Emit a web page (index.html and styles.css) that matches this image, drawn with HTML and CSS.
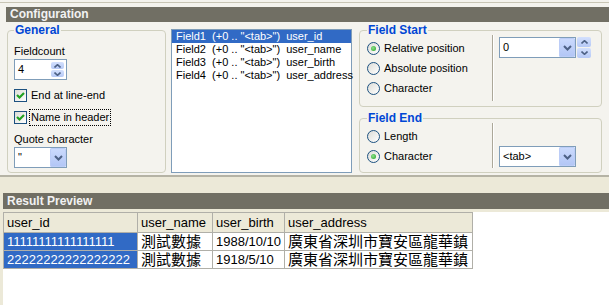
FILE: index.html
```html
<!DOCTYPE html>
<html>
<head>
<meta charset="utf-8">
<link rel="stylesheet" href="styles.css">
</head>
<body>
<div class="config">
  <div class="cfg-inner">
    <div class="bar">Configuration</div>
    <div class="cfg-row">
      <fieldset class="grp general">
        <legend>General</legend>
        <div class="lbl first">Fieldcount</div>
        <div class="edit small">
          <span class="val">4</span>
          <span class="updown">
            <span class="ub"><svg width="7" height="4" viewBox="0 0 7 4"><polyline points="0.5,3.5 3.5,0.7 6.5,3.5" fill="none" stroke="#4D6185" stroke-width="1.6"/></svg></span>
            <span class="ub"><svg width="7" height="4" viewBox="0 0 7 4"><polyline points="0.5,0.5 3.5,3.3 6.5,0.5" fill="none" stroke="#4D6185" stroke-width="1.6"/></svg></span>
          </span>
        </div>
        <div class="chk-row r1">
          <span class="chk"><svg width="9" height="9" viewBox="0 0 9 9"><polyline points="1,4 3.5,6.5 8,2" fill="none" stroke="#21A121" stroke-width="2.2"/></svg></span>
          <span class="chk-lbl">End at line-end</span>
        </div>
        <div class="chk-row r2">
          <span class="chk"><svg width="9" height="9" viewBox="0 0 9 9"><polyline points="1,4 3.5,6.5 8,2" fill="none" stroke="#21A121" stroke-width="2.2"/></svg></span>
          <span class="chk-lbl focus">Name in header</span>
        </div>
        <div class="lbl quote">Quote character</div>
        <div class="edit small combo">
          <span class="val">"</span>
          <span class="drop"><svg width="9" height="6" viewBox="0 0 9 6"><polyline points="1,1 4.5,4.5 8,1" fill="none" stroke="#4D6185" stroke-width="2"/></svg></span>
        </div>
      </fieldset>
      <div class="listbox">
        <div class="item sel">Field1  (+0 .. "&lt;tab&gt;")  user_id</div>
        <div class="item">Field2  (+0 .. "&lt;tab&gt;")  user_name</div>
        <div class="item">Field3  (+0 .. "&lt;tab&gt;")  user_birth</div>
        <div class="item">Field4  (+0 .. "&lt;tab&gt;")  user_address</div>
      </div>
      <div class="right">
        <fieldset class="grp fstart">
          <legend>Field Start</legend>
          <div class="fs-body">
            <div class="radios">
              <div class="radio-row"><span class="radio on"></span>Relative position</div>
              <div class="radio-row"><span class="radio"></span>Absolute position</div>
              <div class="radio-row"><span class="radio"></span>Character</div>
            </div>
            <div class="sep sep1"></div>
            <div class="ctrl">
              <div class="edit wide">
                <span class="val">0</span>
                <span class="drop"><svg width="9" height="6" viewBox="0 0 9 6"><polyline points="1,1 4.5,4.5 8,1" fill="none" stroke="#4D6185" stroke-width="2"/></svg></span>
              </div>
              <div class="spin-ext">
                <span class="ub"><svg width="7" height="4" viewBox="0 0 7 4"><polyline points="0.5,3.5 3.5,0.7 6.5,3.5" fill="none" stroke="#4D6185" stroke-width="1.6"/></svg></span>
                <span class="ub"><svg width="7" height="4" viewBox="0 0 7 4"><polyline points="0.5,0.5 3.5,3.3 6.5,0.5" fill="none" stroke="#4D6185" stroke-width="1.6"/></svg></span>
              </div>
            </div>
          </div>
        </fieldset>
        <fieldset class="grp fend">
          <legend>Field End</legend>
          <div class="fs-body">
            <div class="radios">
              <div class="radio-row"><span class="radio"></span>Length</div>
              <div class="radio-row"><span class="radio on"></span>Character</div>
            </div>
            <div class="sep sep2"></div>
            <div class="ctrl ctrl2">
              <div class="edit wide">
                <span class="val">&lt;tab&gt;</span>
                <span class="drop"><svg width="9" height="6" viewBox="0 0 9 6"><polyline points="1,1 4.5,4.5 8,1" fill="none" stroke="#4D6185" stroke-width="2"/></svg></span>
              </div>
            </div>
          </div>
        </fieldset>
      </div>
    </div>
  </div>
</div>
<div class="results">
  <div class="bar bar2">Result Preview</div>
  <div class="grid-area">
    <div class="table">
      <div class="c h">user_id</div>
      <div class="c h">user_name</div>
      <div class="c h">user_birth</div>
      <div class="c h">user_address</div>
      <div class="c s">11111111111111111</div>
      <div class="c cjk">測試數據</div>
      <div class="c">1988/10/10</div>
      <div class="c cjk">廣東省深圳市寶安區龍華鎮</div>
      <div class="c s">22222222222222222</div>
      <div class="c cjk">測試數據</div>
      <div class="c">1918/5/10</div>
      <div class="c cjk">廣東省深圳市寶安區龍華鎮</div>
    </div>
  </div>
</div>
</body>
</html>
```
FILE: styles.css
```css
body {
  margin: 0;
  width: 609px;
  height: 305px;
  overflow: hidden;
  background: #ECE9D8;
  font-family: "Liberation Sans", Arial, sans-serif;
  font-size: 11px;
  color: #000;
}

.config {
  height: 177px;
  box-sizing: border-box;
  background: #F4F3EE;
  padding-top: 2px;
  border-bottom: 2px solid #B5B3A5;
}

.cfg-inner {
  border-top: 1px solid #C8C5B5;
  padding: 4px 0 0 6px;
}

.bar {
  height: 15px;
  line-height: 15px;
  background: #716F64;
  color: #F2F2F2;
  font-weight: bold;
  font-size: 12px;
  padding-left: 4px;
}

.cfg-row {
  display: flex;
  align-items: flex-start;
  margin-top: 1px;
}

.grp {
  margin: 0;
  border: 1px solid #D0D0BF;
  border-radius: 4px;
  box-sizing: border-box;
  padding: 0 0 0 6px;
  min-width: 0;
}

.grp legend {
  padding: 0 1px;
  font-weight: bold;
  font-size: 12px;
  line-height: 14px;
  color: #0046D5;
}

.general {
  width: 159px;
  height: 150px;
  margin-left: 1px;
}

.lbl {
  line-height: 13px;
}

.lbl.first {
  margin-top: 8px;
}

.lbl.quote {
  margin-top: 7px;
}

.edit {
  height: 21px;
  box-sizing: border-box;
  border: 1px solid #7F9DB9;
  background: #fff;
  display: flex;
}

.edit.small {
  width: 53px;
  margin-top: 1px;
}

.edit.wide {
  width: 77px;
}

.val {
  flex: 1;
  padding-left: 3px;
  line-height: 19px;
}

.updown {
  display: flex;
  flex-direction: column;
  gap: 1px;
  width: 13px;
  margin: 2px 2px 2px 0;
}

.ub {
  flex: 1;
  background: linear-gradient(#D3E0FD, #B6C9F6);
  border-radius: 2px;
  display: flex;
  align-items: center;
  justify-content: center;
}

.drop {
  width: 16px;
  background: linear-gradient(#CCDBFD, #B1C5F5);
  border-radius: 2px;
  box-shadow: inset 0 0 0 1px #BCCDF7;
  display: flex;
  align-items: center;
  justify-content: center;
}

.chk-row {
  display: flex;
  align-items: center;
  height: 17px;
}

.r1 {
  margin-top: 7px;
}

.r2 {
  margin-top: 5px;
}

.chk {
  width: 13px;
  height: 13px;
  box-sizing: border-box;
  border: 1px solid #1C5180;
  background: linear-gradient(135deg, #DCDCD7, #FFFFFF);
  display: flex;
  align-items: center;
  justify-content: center;
}

.chk-lbl {
  margin-left: 2px;
  padding: 0 1px;
  border: 1px dotted transparent;
  line-height: 15px;
}

.chk-lbl.focus {
  border-color: #000;
}

.listbox {
  margin-left: 5px;
  margin-top: 6px;
  width: 181px;
  height: 144px;
  box-sizing: border-box;
  border: 1px solid #7F9DB9;
  background: #fff;
}

.item {
  line-height: 13px;
  padding-left: 4px;
  white-space: pre;
}

.item.sel {
  background: #316AC5;
  color: #fff;
}

.right {
  margin-left: 7px;
  width: 243px;
}

.fstart {
  height: 84px;
  padding-left: 7px;
}

.fend {
  height: 62px;
  margin-top: 4px;
  padding-left: 7px;
}

.fs-body {
  display: flex;
  align-items: flex-start;
}

.radios {
  width: 125px;
  margin-top: 1px;
}

.radio-row {
  display: flex;
  align-items: center;
  height: 20px;
}

.radio {
  width: 13px;
  height: 13px;
  box-sizing: border-box;
  border-radius: 50%;
  border: 1px solid #1C5180;
  background: linear-gradient(135deg, #DCDCD7, #FFFFFF);
  margin-right: 4px;
  display: flex;
  align-items: center;
  justify-content: center;
}

.radio.on::after {
  content: "";
  width: 5px;
  height: 5px;
  border-radius: 50%;
  background: radial-gradient(circle at 40% 40%, #8EE08C, #21A121);
}

.sep {
  width: 0;
  border-left: 1px solid #ACA899;
  border-right: 1px solid #FFFFFF;
  margin-top: -2px;
}

.sep1 {
  height: 66px;
}

.sep2 {
  height: 45px;
}

.ctrl {
  margin-left: 5px;
  display: flex;
  gap: 1px;
}

.ctrl2 {
  margin-top: 21px;
}

.spin-ext {
  width: 14px;
  height: 21px;
  display: flex;
  flex-direction: column;
  gap: 1px;
}

.results {
  margin-top: 16px;
}

.bar2 {
  margin-left: 3px;
  height: 16px;
  line-height: 16px;
}

.grid-area {
  margin-top: 3px;
  margin-left: 3px;
  height: 93px;
  background: #fff;
}

.table {
  display: inline-grid;
  grid-template-columns: 133px 74px 71px 187px;
  grid-template-rows: 19px 17px 17px;
  gap: 1px;
  padding: 1px;
  background: #B0AFA8;
}

.c {
  background: #fff;
  padding: 0 3px;
  font-size: 13px;
  line-height: 17px;
  white-space: nowrap;
  overflow: hidden;
}

.c.h {
  background: #ECE9D8;
  line-height: 19px;
}

.c.s {
  background: #316AC5;
  color: #fff;
}

.c.cjk {
  font-family: "Noto Sans CJK TC", sans-serif;
  font-size: 15px;
  line-height: 14px;
  padding-top: 1px;
  padding-right: 0;
  overflow: visible;
}
```
